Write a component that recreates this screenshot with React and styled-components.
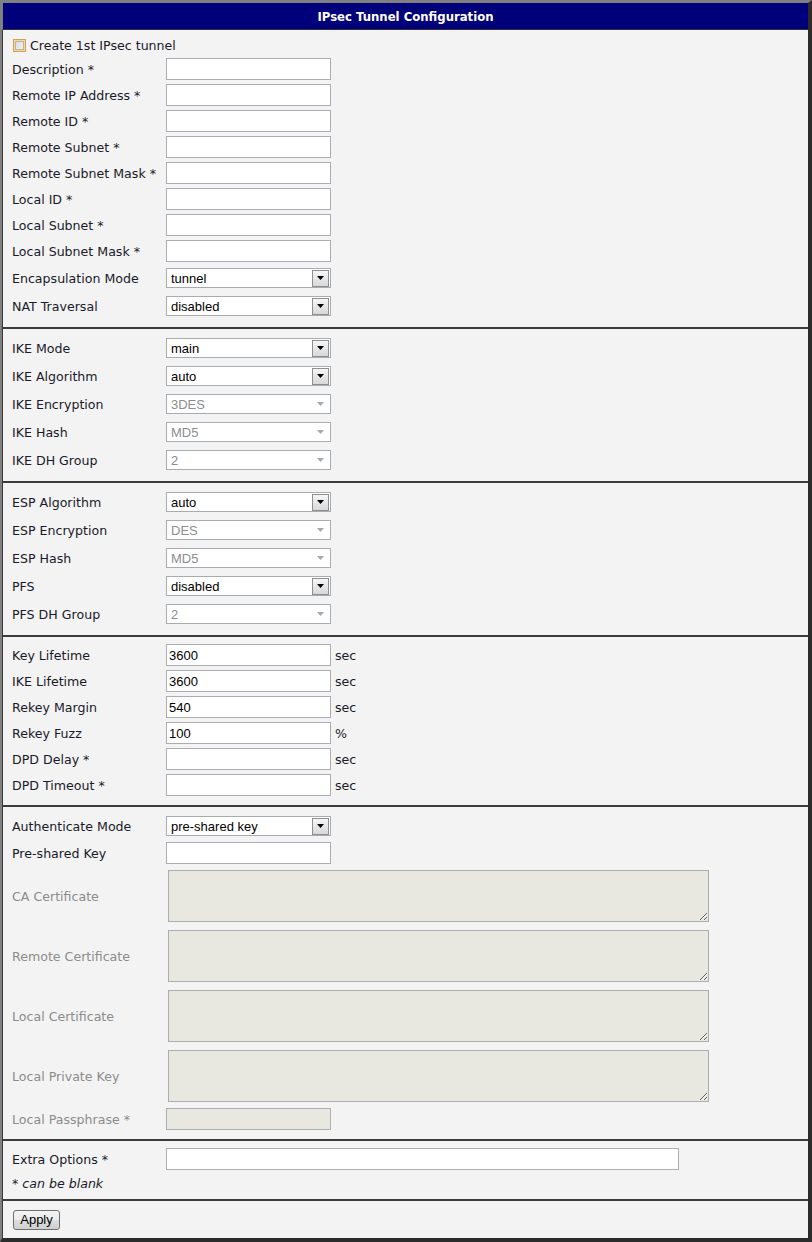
import React from 'react';
import styled, { createGlobalStyle } from 'styled-components';

const Global = createGlobalStyle`
  html, body { margin: 0; padding: 0; background: #f3f3f3; }
  body { font-family: "DejaVu Sans", Verdana, sans-serif; }
  * { box-sizing: border-box; }
`;

const Frame = styled.div`
  width: 812px;
  height: 1242px;
  border-top: 3px solid #808080;
  border-left: 2px solid #808080;
  border-right: 4px solid #2b2b2b;
  border-bottom: 4px solid #2b2b2b;
  background: #f3f3f3;
  display: flex;
  flex-direction: column;
`;

const Header = styled.div`
  height: 27px;
  flex-shrink: 0;
  padding-top: 1px;
  background: #00007a;
  color: #fff;
  font-weight: bold;
  font-size: 11.7px;
  display: flex;
  align-items: center;
  justify-content: center;
  border-left: 1px solid #808080;
  border-bottom: 1px solid #333;
`;

const Body = styled.div`
  flex: 1;
  border-left: 1px solid #3a3a3a;
  display: flex;
  flex-direction: column;
`;

const Section = styled.div`
  padding: ${p => p.$pt ?? 5}px 0 ${p => p.$pb ?? 7}px 9px;
  & + & { border-top: 2px solid #3c3c3c; }
`;

const Row = styled.div`
  display: flex;
  align-items: center;
  height: ${p => p.$h ?? 26}px;
`;

const Label = styled.div`
  width: 154px;
  flex-shrink: 0;
  font-size: 12.6px;
  color: ${p => (p.$disabled ? '#8c8c8c' : '#1a1a2a')};
  white-space: nowrap;
`;

const TextInput = styled.input`
  width: ${p => p.$w ?? 165}px;
  height: 22px;
  margin: 0;
  padding: 0 2px;
  border: 1px solid #abadb3;
  background: ${p => (p.disabled ? '#e9e8e0' : '#fff')};
  font: 13px "Liberation Sans", Arial, sans-serif;
  color: #000;
  outline: none;
`;

const Unit = styled.span`
  margin-left: 4px;
  font-size: 12.6px;
  color: #1a1a2a;
`;

const SelectBox = styled.div`
  width: 165px;
  height: 20px;
  border: 1px solid #a5acb2;
  background: #fff;
  display: flex;
  align-items: center;
`;

const NativeSelect = styled.select`
  appearance: none;
  -webkit-appearance: none;
  flex: 1;
  height: 100%;
  border: none;
  background: transparent;
  margin: 0;
  padding: 0 0 0 4px;
  font: 13px "Liberation Sans", Arial, sans-serif;
  color: ${p => (p.disabled ? '#8d8d8d' : '#000')};
  opacity: 1;
  outline: none;
`;

const ArrowBtn = styled.span`
  width: 17px;
  height: 17px;
  margin-right: 1px;
  border: 1px solid ${p => (p.$disabled ? 'transparent' : '#8f8f8f')};
  background: ${p => (p.$disabled ? '#fff' : 'linear-gradient(#f6f6f6, #d8d8d8)')};
  display: flex;
  align-items: center;
  justify-content: center;
  flex-shrink: 0;
`;

const TextArea = styled.textarea`
  width: 541px;
  height: 52px;
  margin: 0 0 0 2px;
  border: 1px solid #abadb3;
  background: #e9e8e0;
  resize: both;
  outline: none;
  font: 13px "Liberation Sans", Arial, sans-serif;
`;

const CheckRow = styled.label`
  display: flex;
  align-items: center;
  height: 22px;
  font-size: 12.6px;
  color: #1a1a2a;
`;

const CheckBox = styled.span`
  width: 13px;
  height: 13px;
  margin: 0 4px 0 1px;
  border: 1px solid #d9a24a;
  background: linear-gradient(135deg, #d4d4d4, #f8f8f8);
  box-shadow: inset 0 0 0 1px #f0d8a8, inset 0 0 0 2px #b9b4ab;
`;

const Note = styled.div`
  height: 22px;
  display: flex;
  align-items: center;
  font-size: 12.6px;
  font-style: italic;
  color: #1a1a2a;
`;

const Button = styled.button`
  width: 47px;
  height: 20px;
  margin: 0 0 0 1px;
  padding: 0;
  border: 1px solid #707070;
  border-radius: 3px;
  background: linear-gradient(#f4f4f4 0%, #ebebeb 50%, #dddddd 51%, #cfcfcf 100%);
  font: 13px "Liberation Sans", Arial, sans-serif;
  color: #000;
`;

function Select({ value, disabled }) {
  return (
    <SelectBox>
      <NativeSelect disabled={disabled} defaultValue={value}>
        <option value={value}>{value}</option>
      </NativeSelect>
      <ArrowBtn $disabled={disabled}>
        <svg width="7" height="4" viewBox="0 0 7 4">
          <path d="M0 0H7L3.5 4Z" fill={disabled ? '#a9a9a9' : '#000'} />
        </svg>
      </ArrowBtn>
    </SelectBox>
  );
}

function InputRow({ label, value = '', unit, disabled }) {
  return (
    <Row>
      <Label $disabled={disabled}>{label}</Label>
      <TextInput defaultValue={value} disabled={disabled} />
      {unit && <Unit>{unit}</Unit>}
    </Row>
  );
}

function SelectRow({ label, value, disabled }) {
  return (
    <Row $h={28}>
      <Label>{label}</Label>
      <Select value={value} disabled={disabled} />
    </Row>
  );
}

function AreaRow({ label }) {
  return (
    <Row $h={60}>
      <Label $disabled>{label}</Label>
      <TextArea readOnly />
    </Row>
  );
}

export default function App() {
  return (
    <>
      <Global />
      <Frame>
        <Header>IPsec Tunnel Configuration</Header>
        <Body>
          <Section $pt={4}>
            <CheckRow>
              <CheckBox />
              Create 1st IPsec tunnel
            </CheckRow>
            <InputRow label="Description *" />
            <InputRow label="Remote IP Address *" />
            <InputRow label="Remote ID *" />
            <InputRow label="Remote Subnet *" />
            <InputRow label="Remote Subnet Mask *" />
            <InputRow label="Local ID *" />
            <InputRow label="Local Subnet *" />
            <InputRow label="Local Subnet Mask *" />
            <SelectRow label="Encapsulation Mode" value="tunnel" />
            <SelectRow label="NAT Traversal" value="disabled" />
          </Section>
          <Section>
            <SelectRow label="IKE Mode" value="main" />
            <SelectRow label="IKE Algorithm" value="auto" />
            <SelectRow label="IKE Encryption" value="3DES" disabled />
            <SelectRow label="IKE Hash" value="MD5" disabled />
            <SelectRow label="IKE DH Group" value="2" disabled />
          </Section>
          <Section>
            <SelectRow label="ESP Algorithm" value="auto" />
            <SelectRow label="ESP Encryption" value="DES" disabled />
            <SelectRow label="ESP Hash" value="MD5" disabled />
            <SelectRow label="PFS" value="disabled" />
            <SelectRow label="PFS DH Group" value="2" disabled />
          </Section>
          <Section>
            <InputRow label="Key Lifetime" value="3600" unit="sec" />
            <InputRow label="IKE Lifetime" value="3600" unit="sec" />
            <InputRow label="Rekey Margin" value="540" unit="sec" />
            <InputRow label="Rekey Fuzz" value="100" unit="%" />
            <InputRow label="DPD Delay *" unit="sec" />
            <InputRow label="DPD Timeout *" unit="sec" />
          </Section>
          <Section>
            <SelectRow label="Authenticate Mode" value="pre-shared key" />
            <InputRow label="Pre-shared Key" />
            <AreaRow label="CA Certificate" />
            <AreaRow label="Remote Certificate" />
            <AreaRow label="Local Certificate" />
            <AreaRow label="Local Private Key" />
            <Row>
              <Label $disabled>Local Passphrase *</Label>
              <TextInput disabled />
            </Row>
          </Section>
          <Section $pb={5}>
            <Row>
              <Label>Extra Options *</Label>
              <TextInput $w={513} />
            </Row>
            <Note>* can be blank</Note>
          </Section>
          <Section $pt={8} $pb={9}>
            <Button type="button">Apply</Button>
          </Section>
        </Body>
      </Frame>
    </>
  );
}
